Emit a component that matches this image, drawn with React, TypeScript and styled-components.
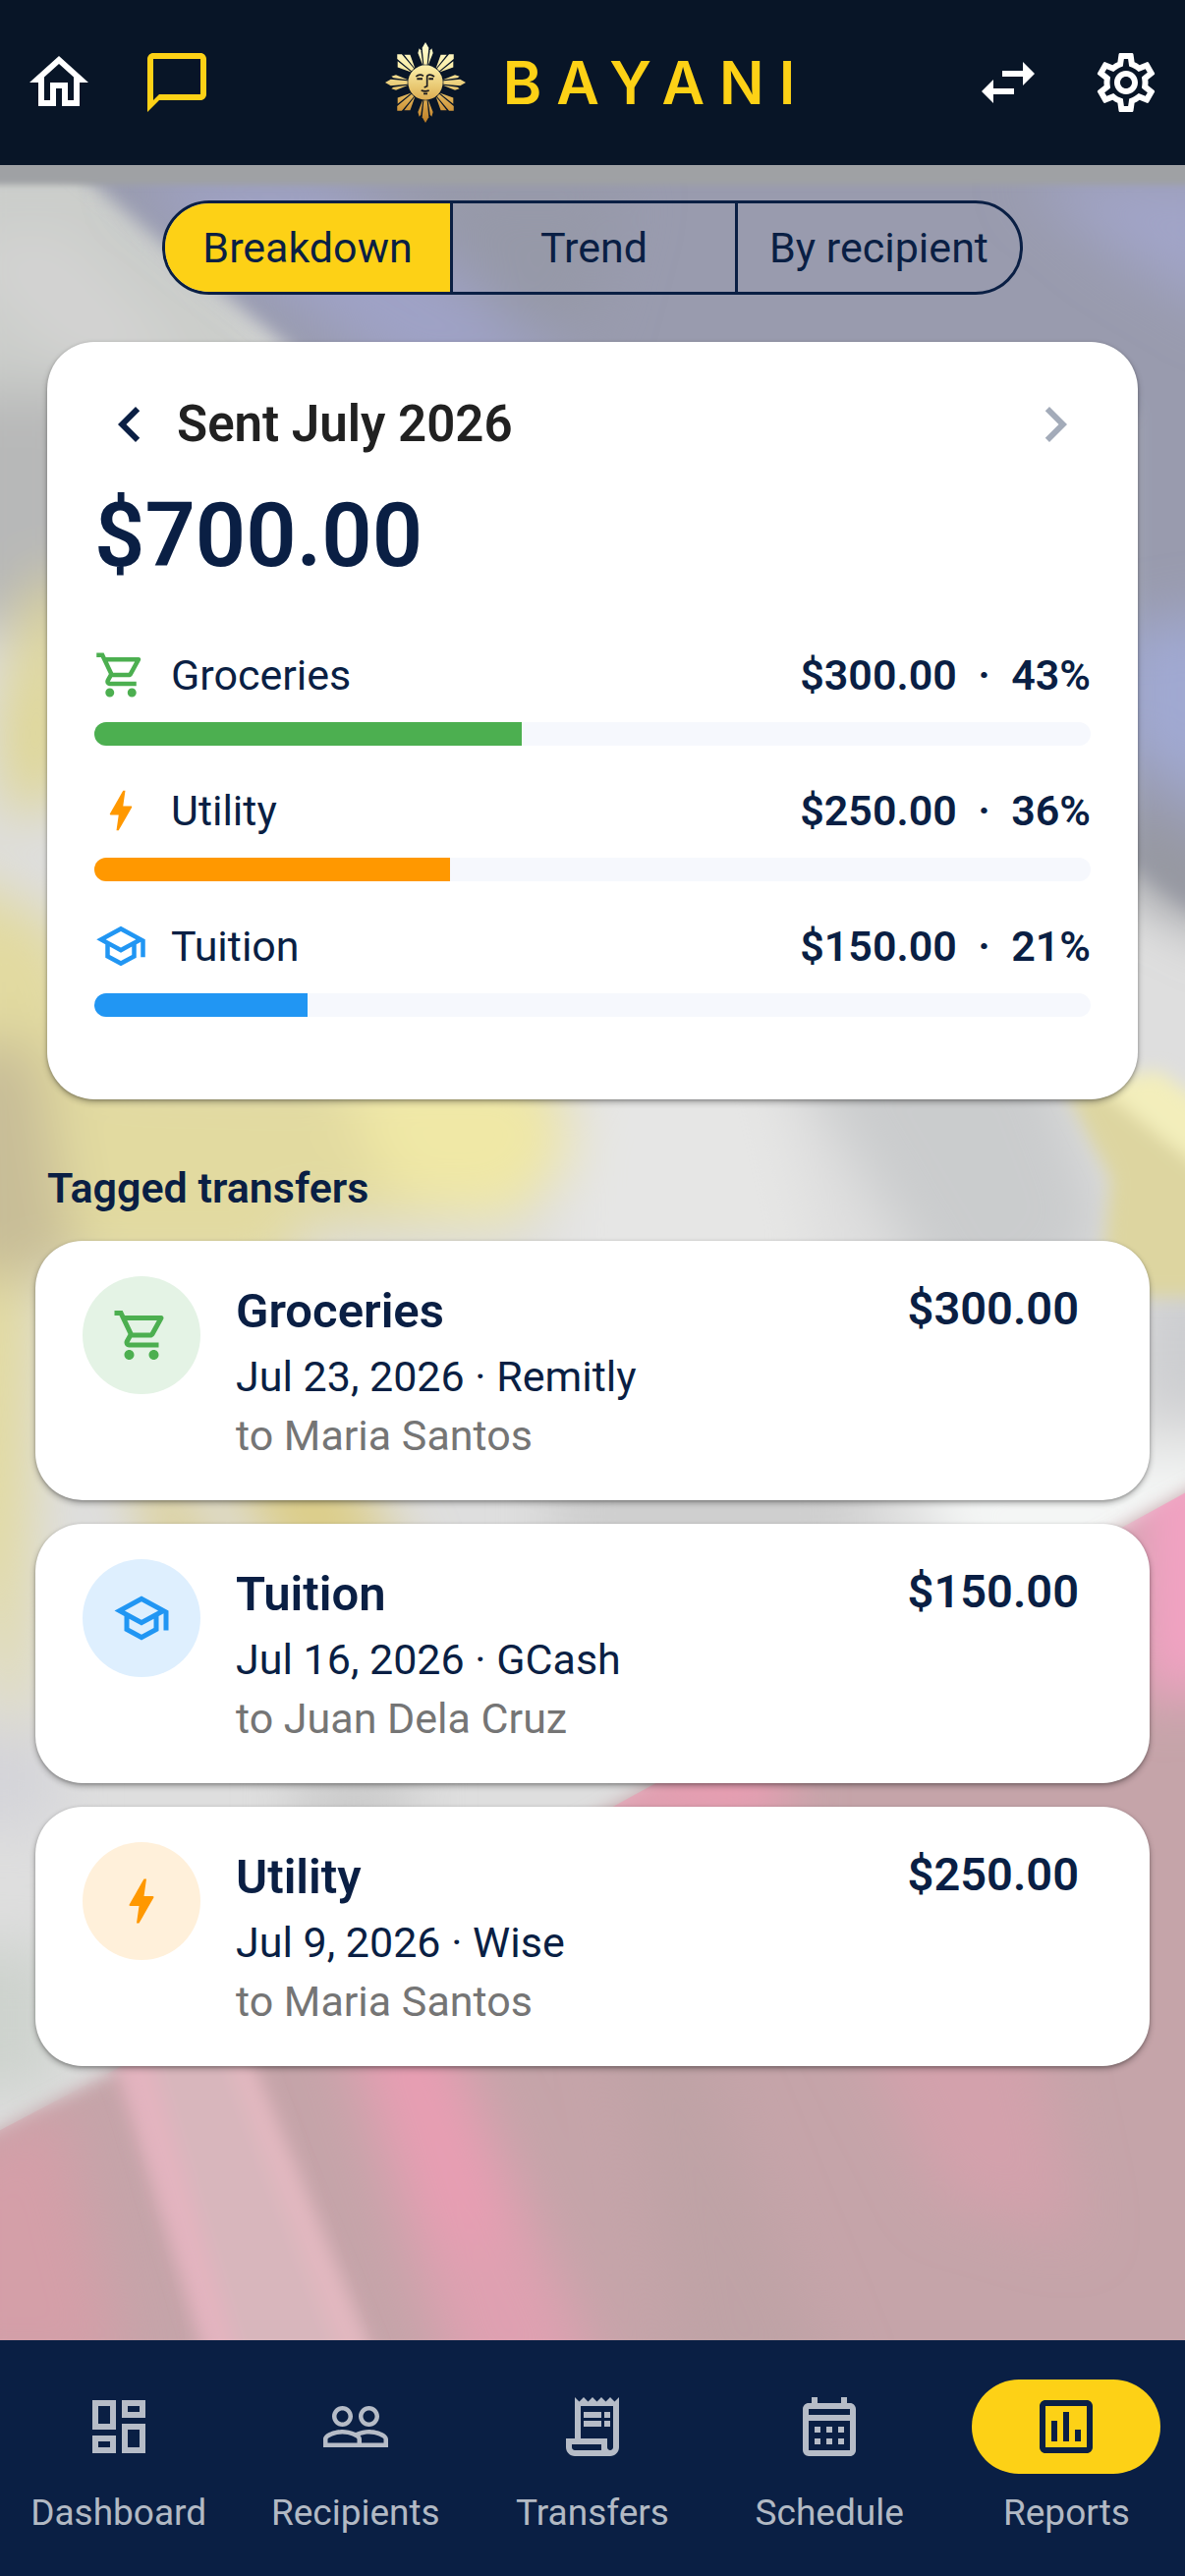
import React, { useState } from "react";
import styled, { createGlobalStyle } from "styled-components";
import type { IconType } from "react-icons";
import {
  MdBolt,
  MdChatBubbleOutline,
  MdChevronLeft,
  MdChevronRight,
  MdOutlineAssessment,
  MdOutlineCalendarMonth,
  MdOutlineDashboard,
  MdOutlineHome,
  MdOutlineReceiptLong,
  MdOutlineSchool,
  MdOutlineSettings,
  MdOutlineShoppingCart,
  MdPeopleOutline,
  MdSwapHoriz,
} from "react-icons/md";

const navy = "#0a1f44";
const yellow = "#fdd116";

const GlobalStyle = createGlobalStyle`
  * {
    box-sizing: border-box;
  }

  body {
    margin: 0;
    background: #d6d6d6;
    color: ${navy};
    font-family: Roboto, "Noto Sans", sans-serif;
    font-size: 43px;
    line-height: 60px;
  }

  button {
    margin: 0;
    padding: 0;
    border: 0;
    background: none;
    color: inherit;
    font: inherit;
    cursor: pointer;
  }

  h1, h2, h3, p, ul {
    margin: 0;
    padding: 0;
    font-size: inherit;
    font-weight: inherit;
  }

  ul {
    list-style: none;
  }
`;

const Page = styled.div`
  position: relative;
  isolation: isolate;
  min-height: 100vh;
  display: flex;
  flex-direction: column;
`;

const Backdrop = styled.svg`
  position: absolute;
  inset: 0;
  z-index: -1;
  width: 100%;
  height: 100%;
`;

const TopBar = styled.header`
  display: grid;
  grid-template-columns: 1fr auto 1fr;
  align-items: center;
  height: 168px;
  padding: 0 24px;
  background: #081527;
`;

const TopActions = styled.div`
  display: flex;
  gap: 48px;

  &:last-child {
    justify-content: flex-end;
  }
`;

const IconButton = styled.button<{ $color?: string }>`
  display: flex;
  color: ${({ $color }) => $color || "#fff"};
  font-size: 72px;
  line-height: 1;

  &:disabled {
    cursor: default;
  }
`;

const Brand = styled.div`
  display: flex;
  align-items: center;
  gap: 38px;
`;

const SunLogo = styled.svg`
  width: 82px;
  height: 82px;
`;

const BrandName = styled.h1`
  margin-right: -10px;
  color: ${yellow};
  font-family: Inter, Lato, sans-serif;
  font-size: 60px;
  font-weight: 600;
  line-height: 72px;
  letter-spacing: 15px;
`;

const Content = styled.main`
  flex: 1;
  display: flex;
  flex-direction: column;
  padding: 36px 36px 48px;
`;

const Segments = styled.div`
  align-self: center;
  display: inline-grid;
  grid-template-columns: repeat(3, 1fr);
  height: 96px;
  border: 3px solid ${navy};
  border-radius: 48px;
  overflow: hidden;
`;

const Segment = styled.button<{ $active: boolean }>`
  padding: 0 32px;
  background: ${({ $active }) => ($active ? yellow : "transparent")};

  & + & {
    border-left: 3px solid ${navy};
  }
`;

const Card = styled.section`
  background: #fff;
  border-radius: 48px;
  box-shadow: 0 3px 6px rgba(0, 0, 0, 0.3), 0 1px 3px rgba(0, 0, 0, 0.2);
`;

const SummaryCard = styled(Card)`
  margin: 48px 12px 0;
  padding: 48px;
`;

const MonthRow = styled.div`
  display: flex;
  align-items: center;
  gap: 12px;
`;

const MonthTitle = styled.h2`
  flex: 1;
  color: #212121;
  font-size: 51px;
  font-weight: 600;
  line-height: 72px;
`;

const Total = styled.p`
  margin: 18px 0 51px;
  font-size: 90px;
  font-weight: 600;
  line-height: 120px;
`;

const CategoryItem = styled.li`
  padding-bottom: 36px;
`;

const CategoryHead = styled.div`
  display: flex;
  align-items: center;
  gap: 24px;
  margin-bottom: 18px;
`;

const CategoryIcon = styled.span<{ $color: string }>`
  display: flex;
  color: ${({ $color }) => $color};
  font-size: 54px;
`;

const CategoryName = styled.span`
  flex: 1;
`;

const CategoryValue = styled.span`
  font-weight: 600;
  white-space: pre;
`;

const Track = styled.div`
  height: 24px;
  border-radius: 12px;
  background: #f6f8fd;
  overflow: hidden;
`;

const Fill = styled.div<{ $color: string }>`
  height: 100%;
  background: ${({ $color }) => $color};
`;

const SectionTitle = styled.h2`
  margin: 60px 12px 24px;
  font-weight: 600;
`;

const TransferList = styled.ul`
  display: flex;
  flex-direction: column;
  gap: 24px;
`;

const TransferCard = styled(Card).attrs({ as: "li" })`
  display: flex;
  align-items: flex-start;
  gap: 36px;
  padding: 36px 72px 36px 48px;
`;

const Avatar = styled.span<{ $color: string; $tint: string }>`
  display: flex;
  align-items: center;
  justify-content: center;
  width: 120px;
  height: 120px;
  border-radius: 50%;
  background: ${({ $tint }) => $tint};
  color: ${({ $color }) => $color};
  font-size: 60px;
`;

const TransferInfo = styled.div`
  flex: 1;
`;

const TransferTitle = styled.h3`
  font-size: 49px;
  font-weight: 600;
  line-height: 72px;
`;

const Recipient = styled.p`
  color: #757575;
`;

const Amount = styled.span`
  font-size: 47px;
  font-weight: 600;
  line-height: 66px;
`;

const BottomNav = styled.nav`
  display: flex;
  padding: 40px 0;
  background: ${navy};
`;

const NavItem = styled.button`
  flex: 1 1 0;
  display: flex;
  flex-direction: column;
  align-items: center;
  gap: 16px;
  color: rgba(255, 255, 255, 0.7);
  font-size: 37px;
  line-height: 48px;
`;

const NavPill = styled.span<{ $active: boolean }>`
  display: flex;
  align-items: center;
  justify-content: center;
  width: 192px;
  height: 96px;
  border-radius: 48px;
  background: ${({ $active }) => ($active ? yellow : "transparent")};
  color: ${({ $active }) => ($active ? navy : "inherit")};
  font-size: 72px;
`;

interface Category {
  Icon: IconType;
  color: string;
  tint: string;
}

const categories: Record<string, Category> = {
  Groceries: { Icon: MdOutlineShoppingCart, color: "#4caf50", tint: "#e4f3e5" },
  Utility: { Icon: MdBolt, color: "#ff9800", tint: "#fff0da" },
  Tuition: { Icon: MdOutlineSchool, color: "#2196f3", tint: "#deeffe" },
};

const breakdown = [
  { name: "Groceries", amount: 300 },
  { name: "Utility", amount: 250 },
  { name: "Tuition", amount: 150 },
];

const transfers = [
  { name: "Groceries", date: "Jul 23, 2026", via: "Remitly", to: "Maria Santos", amount: 300 },
  { name: "Tuition", date: "Jul 16, 2026", via: "GCash", to: "Juan Dela Cruz", amount: 150 },
  { name: "Utility", date: "Jul 9, 2026", via: "Wise", to: "Maria Santos", amount: 250 },
];

const navItems = [
  { label: "Dashboard", Icon: MdOutlineDashboard },
  { label: "Recipients", Icon: MdPeopleOutline },
  { label: "Transfers", Icon: MdOutlineReceiptLong },
  { label: "Schedule", Icon: MdOutlineCalendarMonth },
  { label: "Reports", Icon: MdOutlineAssessment },
];

const views = ["Breakdown", "Trend", "By recipient"];

const money = (value: number) => `$${value.toFixed(2)}`;

const Sun = () => (
  <SunLogo viewBox="-123 -123 246 246" aria-hidden="true">
    <defs>
      <linearGradient id="gold" gradientUnits="userSpaceOnUse" x1="0" y1="-123" x2="0" y2="123">
        <stop offset="0" stopColor="#fffcd2" />
        <stop offset="0.3" stopColor="#fbeeaa" />
        <stop offset="0.55" stopColor="#e9c973" />
        <stop offset="0.75" stopColor="#d9a54a" />
        <stop offset="1" stopColor="#bd7d26" />
      </linearGradient>
      <mask id="sun" maskUnits="userSpaceOnUse" x="-123" y="-123" width="246" height="246">
        <g fill="#fff">
          <circle r="53" />
          {[0, 90, 180, 270].map((angle) => (
            <g key={angle} transform={`rotate(${angle})`}>
              <path d="M-5 -55L-10 -106L0 -123L10 -106L5 -55Z" />
              <path d="M-9 -55L-23 -90L-19 -104L-14 -98L-8 -55Z" />
              <path d="M9 -55L23 -90L19 -104L14 -98L8 -55Z" />
            </g>
          ))}
          {[45, 135, 225, 315].map((angle) => (
            <g key={angle} transform={`rotate(${angle})`}>
              <path d="M-5 -55L-10 -112L0 -122L10 -112L5 -55Z" />
              <path d="M-9 -55L-27 -93L-14 -106L-8 -55Z" />
              <path d="M9 -55L27 -93L14 -106L8 -55Z" />
            </g>
          ))}
        </g>
      </mask>
    </defs>
    <rect x="-123" y="-123" width="246" height="246" fill="url(#gold)" mask="url(#sun)" />
    <g fill="none" stroke="#1a1a20" strokeWidth="5">
      <path d="M-29 -18Q-18 -28 -6 -20" />
      <path d="M27 -18Q14 -28 5 -20L5 11L-4 15" />
      <path d="M-26 -11H-9M10 -11H24" strokeWidth="6" />
      <path d="M-13 24Q0 29 11 24M-6 34H6" />
    </g>
  </SunLogo>
);

// Soft-focus flag: blue field, white and gold folds, red field
const FlagBackdrop = () => (
  <Backdrop viewBox="0 0 1206 2622" preserveAspectRatio="xMidYMid slice" aria-hidden="true">
    <defs>
      <filter id="soft" x="-20%" y="-20%" width="140%" height="140%">
        <feGaussianBlur stdDeviation="28" />
      </filter>
      <filter id="edge" x="-20%" y="-20%" width="140%" height="140%">
        <feGaussianBlur stdDeviation="9" />
      </filter>
      <filter id="topEdge" x="-5%" y="-20%" width="110%" height="140%">
        <feGaussianBlur stdDeviation="3" />
      </filter>
      <clipPath id="redField">
        <path d="M-60 2200L600 1852L1260 1490V2700H-60Z" />
      </clipPath>
    </defs>
    <rect width="1206" height="2622" fill="#dedede" />
    <g filter="url(#soft)">
      <path d="M-60 150H160L330 420H-60Z" fill="#cbcdca" />
      <path d="M-60 400H100V640H-60Z" fill="#b7b8b8" />
      <path d="M-60 250L60 230L200 380H80Z" fill="#d3d3d2" />
      <path d="M30 600L70 580V800L10 840L0 740Z" fill="#dfd68e" />
      <path d="M-60 880L60 940L120 1080L560 1090L590 1170L530 1240L300 1250V1300H40L20 1800L-60 1500Z" fill="#e2daa0" />
      <path d="M340 1080H545L580 1170L520 1245L400 1220Z" fill="#f0e8a6" />
      <path d="M-60 1060H40L80 1300H-60Z" fill="#c8bd97" />
      <path d="M800 1060H1060L1130 1250L1060 1330H960Z" fill="#cacccd" />
      <path d="M600 1060H780L840 1320H560Z" fill="#e6e6e5" />
      <path d="M130 1480H170L240 1620H170Z" fill="#dccf90" />
      <path d="M220 1480H350L420 1600H290Z" fill="#dccd88" />
      <path d="M560 1480H880V1620H560Z" fill="#cfcfcf" />
      <path d="M920 1480H1260V1560L1000 1640Z" fill="#f4f6f5" />
      <path d="M-60 1760H60V1860H-60Z" fill="#d4d4d9" />
      <path d="M-60 1980H60V2130H-60Z" fill="#ced3ce" />
      <path d="M300 1800H420V1870H300Z" fill="#c9c9c9" />
      <path d="M1160 1300H1260V1440H1160Z" fill="#cccdd0" />
    </g>
    <g filter="url(#edge)">
      <path d="M50 150H1260V960L1150 880V420H360L290 350Z" fill="#999bae" />
      <path d="M1085 1110H1150L1260 1210V1320H1120L1130 1200Z" fill="#ddd5a0" />
      <path d="M1110 1100L1260 1220V1150L1180 1090Z" fill="#f3eebb" />
      <path d="M-60 2200L600 1852L1260 1490V2700H-60Z" fill="#c5a4a9" />
    </g>
    <g filter="url(#soft)">
      <path d="M130 180H330L600 390H420L260 280Z" fill="#9fa2c6" />
      <path d="M1040 180H1260V330L1140 260Z" fill="#a1a4c8" />
      <path d="M420 190H640L600 340H520Z" fill="#9699a8" />
      <path d="M1140 640L1260 620V840L1140 760Z" fill="#a0a9d2" />
      <path d="M1140 820L1260 900V960L1140 900Z" fill="#96989e" />
    </g>
    <g clipPath="url(#redField)">
      <g filter="url(#soft)">
        <path d="M1150 1480H1260V1720L1160 1730Z" fill="#f2a2c2" />
        <path d="M600 1820L800 1740V1860H560Z" fill="#e99db2" />
        <path d="M-60 2200L60 2140L130 2420H-60Z" fill="#d49fa8" />
        <path d="M340 2050H450L620 2440H470Z" fill="#dfa0b1" />
        <path d="M370 2050H440L520 2280H450Z" fill="#e99db3" />
        <path d="M840 2000H1040L1100 2280L960 2240Z" fill="#d3a1ac" />
        <path d="M620 2050H700L860 2440H700Z" fill="#bfa3a6" />
      </g>
      <g filter="url(#edge)">
        <path d="M115 2080H240L370 2420H235Z" fill="#d8b6bc" />
        <path d="M110 2080H150L250 2420H215Z" fill="#e3b4bf" />
        <path d="M225 2080H250L390 2420H355Z" fill="#e2b8c0" />
      </g>
    </g>
    <rect x="-40" y="120" width="1286" height="68" fill="#9fa1a4" filter="url(#topEdge)" />
  </Backdrop>
);

const App = () => {
  const [view, setView] = useState("Breakdown");
  const [tab, setTab] = useState("Reports");
  const total = breakdown.reduce((sum, item) => sum + item.amount, 0);

  return (
    <>
      <GlobalStyle />
      <Page>
        <FlagBackdrop />
        <TopBar>
          <TopActions>
            <IconButton aria-label="Home">
              <MdOutlineHome />
            </IconButton>
            <IconButton aria-label="Messages" $color={yellow}>
              <MdChatBubbleOutline />
            </IconButton>
          </TopActions>
          <Brand>
            <Sun />
            <BrandName>BAYANI</BrandName>
          </Brand>
          <TopActions>
            <IconButton aria-label="Switch">
              <MdSwapHoriz />
            </IconButton>
            <IconButton aria-label="Settings">
              <MdOutlineSettings />
            </IconButton>
          </TopActions>
        </TopBar>

        <Content>
          <Segments>
            {views.map((name) => (
              <Segment
                key={name}
                $active={name === view}
                aria-pressed={name === view}
                onClick={() => setView(name)}
              >
                {name}
              </Segment>
            ))}
          </Segments>

          <SummaryCard>
            <MonthRow>
              <IconButton aria-label="Previous month" $color={navy}>
                <MdChevronLeft />
              </IconButton>
              <MonthTitle>Sent July 2026</MonthTitle>
              <IconButton aria-label="Next month" $color="#a3abb9" disabled>
                <MdChevronRight />
              </IconButton>
            </MonthRow>
            <Total>{money(total)}</Total>
            <ul>
              {breakdown.map(({ name, amount }) => {
                const { Icon, color } = categories[name];
                const share = (amount / total) * 100;
                return (
                  <CategoryItem key={name}>
                    <CategoryHead>
                      <CategoryIcon $color={color}>
                        <Icon />
                      </CategoryIcon>
                      <CategoryName>{name}</CategoryName>
                      <CategoryValue>
                        {`${money(amount)}  ·  ${Math.round(share)}%`}
                      </CategoryValue>
                    </CategoryHead>
                    <Track
                      role="progressbar"
                      aria-label={name}
                      aria-valuenow={Math.round(share)}
                    >
                      <Fill $color={color} style={{ width: `${share}%` }} />
                    </Track>
                  </CategoryItem>
                );
              })}
            </ul>
          </SummaryCard>

          <SectionTitle>Tagged transfers</SectionTitle>
          <TransferList>
            {transfers.map(({ name, date, via, to, amount }) => {
              const { Icon, color, tint } = categories[name];
              return (
                <TransferCard key={date}>
                  <Avatar $color={color} $tint={tint}>
                    <Icon />
                  </Avatar>
                  <TransferInfo>
                    <TransferTitle>{name}</TransferTitle>
                    <p>{`${date} · ${via}`}</p>
                    <Recipient>{`to ${to}`}</Recipient>
                  </TransferInfo>
                  <Amount>{money(amount)}</Amount>
                </TransferCard>
              );
            })}
          </TransferList>
        </Content>

        <BottomNav>
          {navItems.map(({ label, Icon }) => (
            <NavItem
              key={label}
              aria-current={label === tab ? "page" : undefined}
              onClick={() => setTab(label)}
            >
              <NavPill $active={label === tab}>
                <Icon />
              </NavPill>
              {label}
            </NavItem>
          ))}
        </BottomNav>
      </Page>
    </>
  );
};

export default App;
